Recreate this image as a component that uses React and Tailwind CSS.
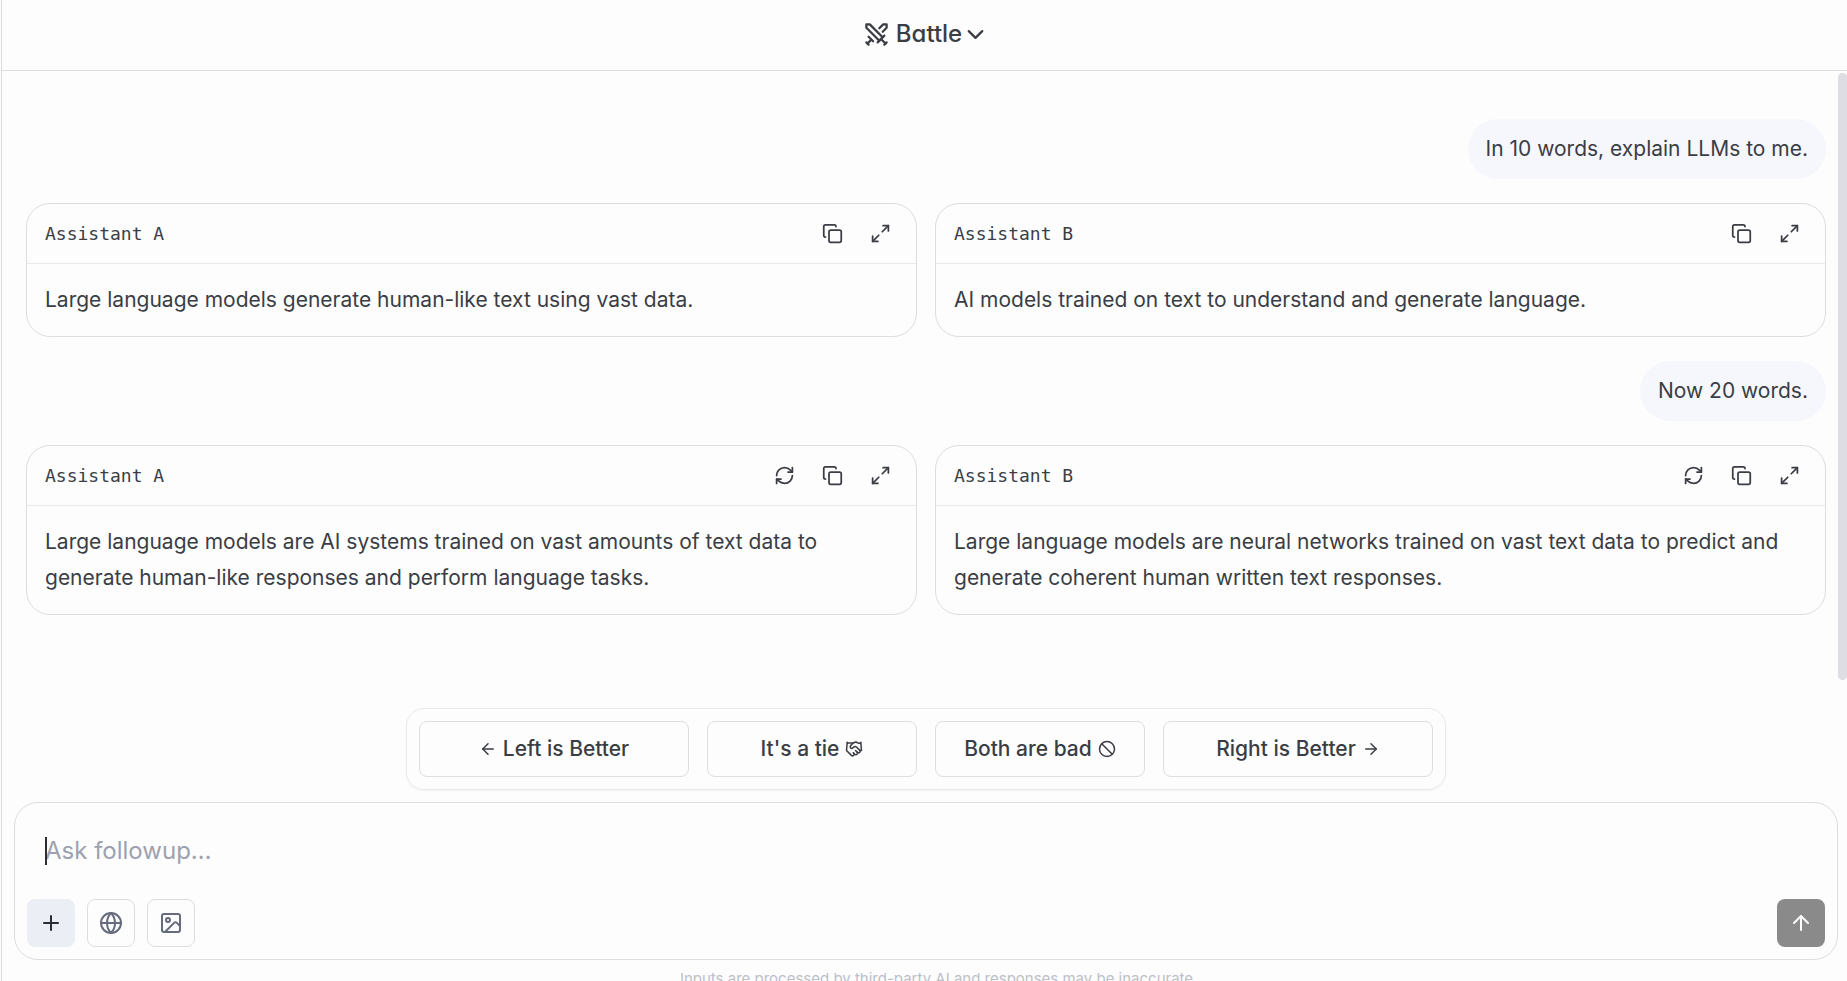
import React, { useState } from "react";
import {
  ArrowLeft,
  ArrowRight,
  ArrowUp,
  Ban,
  ChevronDown,
  Copy,
  Globe,
  Handshake,
  Image,
  Maximize2,
  Plus,
  RefreshCw,
  Swords,
} from "lucide-react";

const turns = [
  {
    prompt: "In 10 words, explain LLMs to me.",
    answers: [
      "Large language models generate human-like text using vast data.",
      "AI models trained on text to understand and generate language.",
    ],
  },
  {
    prompt: "Now 20 words.",
    answers: [
      "Large language models are AI systems trained on vast amounts of text data to generate human-like responses and perform language tasks.",
      "Large language models are neural networks trained on vast text data to predict and generate coherent human written text responses.",
    ],
  },
];

const iconButton = "flex size-12 items-center justify-center rounded-lg";

function Answer({ name, text, canRetry }) {
  return (
    <article className="rounded-3xl border border-[#dddde0]">
      <header className="flex h-15 items-center justify-between border-b border-[#e9e9eb] pl-[18px] pr-3">
        <h2 className="font-['DejaVu_Sans_Mono',monospace] text-lg">{name}</h2>
        <div className="flex">
          {canRetry && (
            <button aria-label="Retry" className={iconButton}>
              <RefreshCw size={21} />
            </button>
          )}
          <button aria-label="Copy" className={iconButton}>
            <Copy size={21} />
          </button>
          <button aria-label="Expand" className={iconButton}>
            <Maximize2 size={21} />
          </button>
        </div>
      </header>
      <p className="p-[18px] text-[21px] leading-9">{text}</p>
    </article>
  );
}

function VoteButton({ wide, children }) {
  return (
    <button
      className={`flex h-14 items-center justify-center gap-1.5 rounded-lg border border-[#dddde3] text-[21px] font-medium ${
        wide ? "w-[270px]" : "w-[210px]"
      }`}
    >
      {children}
    </button>
  );
}

export default function App() {
  const [message, setMessage] = useState("");

  return (
    <div className="flex h-screen flex-col overflow-hidden bg-[#fdfdfd] pl-px font-['Inter',sans-serif] text-[#3b3d45]">
      <div className="flex min-h-0 flex-1 flex-col border-l border-[#dddde0]">
        {/* Header */}
        <header className="flex h-[71px] shrink-0 items-center justify-center border-b border-[#dddde0] pb-0.5 pl-3 pr-[9px]">
          <button className="flex items-center text-2xl font-medium [font-feature-settings:'cv11']">
            <Swords size={27} className="mr-1.5" />
            Battle
            <ChevronDown size={27} />
          </button>
        </header>

        {/* Conversation */}
        <main className="relative min-h-0 flex-1 overflow-hidden pl-6 pr-[21px] pt-12">
          <div className="flex flex-col gap-6">
            {turns.map((turn, i) => (
              <React.Fragment key={turn.prompt}>
                <p className="self-end rounded-[30px] bg-[#f6f7fd] px-[18px] py-3 text-[21px] leading-9">
                  {turn.prompt}
                </p>
                <div className="grid grid-cols-2 gap-[18px]">
                  <Answer name="Assistant A" text={turn.answers[0]} canRetry={i === turns.length - 1} />
                  <Answer name="Assistant B" text={turn.answers[1]} canRetry={i === turns.length - 1} />
                </div>
              </React.Fragment>
            ))}
          </div>
          <div className="absolute right-0 top-0.5 h-[607px] w-[9px] rounded-full bg-[#dddde3]" />
        </main>

        {/* Voting */}
        <div className="mb-3 flex shrink-0 justify-center pl-3 pr-[9px]">
          <div className="flex gap-[18px] rounded-[18px] border border-[#e9e9ec] p-3 shadow-xs">
            <VoteButton wide>
              <ArrowLeft size={18} /> Left is Better
            </VoteButton>
            <VoteButton>
              It's a tie <Handshake size={18} />
            </VoteButton>
            <VoteButton>
              Both are bad <Ban size={18} />
            </VoteButton>
            <VoteButton wide>
              Right is Better <ArrowRight size={18} />
            </VoteButton>
          </div>
        </div>

        {/* Composer */}
        <form className="ml-3 mr-[9px] shrink-0 rounded-3xl border border-[#dddde0] p-3">
          <div className="relative px-[18px] pt-3">
            <input
              aria-label="Message"
              placeholder="Ask followup…"
              value={message}
              onChange={(e) => setMessage(e.target.value)}
              className="block h-[46px] w-full text-2xl outline-none placeholder:text-[#9ca1af]"
            />
            <span className="absolute left-[18px] top-[22px] h-7 w-0.5 bg-[#2b2d33]" />
          </div>
          <div className="mt-[26px] flex gap-3">
            <button type="button" aria-label="Add" className={`${iconButton} bg-[#ebeef4] text-[#2b2d33]`}>
              <Plus size={24} />
            </button>
            <button type="button" aria-label="Search the web" className={`${iconButton} border border-[#dddde0] text-[#666b7d]`}>
              <Globe size={24} />
            </button>
            <button type="button" aria-label="Add image" className={`${iconButton} border border-[#dddde0] text-[#666b7d]`}>
              <Image size={24} />
            </button>
            <button type="button" aria-label="Send" className={`${iconButton} ml-auto bg-[#8a8a8b] text-white`}>
              <ArrowUp size={24} />
            </button>
          </div>
        </form>
        <p className="h-[21px] shrink-0 whitespace-nowrap pl-6 pt-[7px] text-center text-[15px] leading-6 text-[#bcbfca]">
          Inputs are processed by third-party AI and responses may be inaccurate
        </p>
      </div>
    </div>
  );
}
